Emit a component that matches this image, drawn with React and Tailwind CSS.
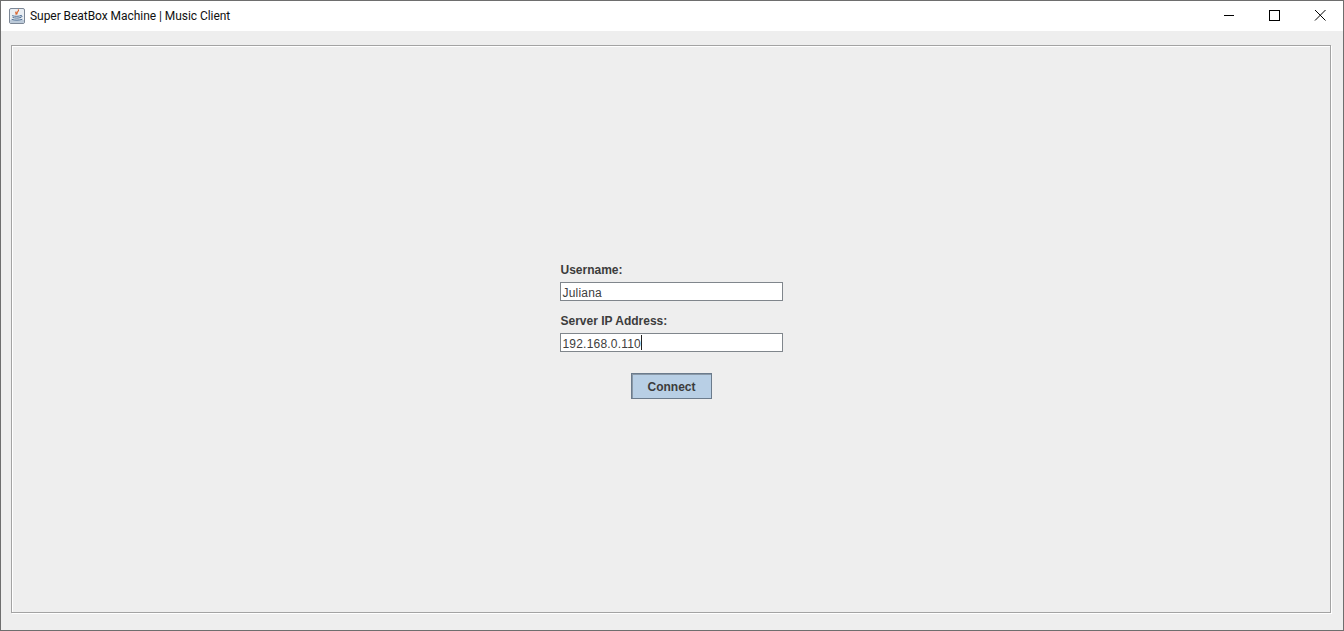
const FONT = "font-['Liberation_Sans',Arial,sans-serif]";

function JavaIcon() {
  return (
    <svg width="16" height="16" viewBox="0 0 16 16" fill="none" className="shrink-0">
      <rect x="0.5" y="0.5" width="15" height="15" rx="1.5" fill="#e9eef3" stroke="#7c8796" />
      <path d="M1 12h14v2.2a.8.8 0 0 1-.8.8H1.8a.8.8 0 0 1-.8-.8z" fill="#bccad9" />
      <path d="M9.4 1.8c1 1.4-2.4 2.2-1.3 4M7 3.8c-1 1 .5 1.6.1 2.6" stroke="#d9622b" strokeWidth="1.1" strokeLinecap="round" />
      <path d="M3.5 7.8c2.5.8 6.4.7 8.4-.2M4 9.6c2.4.7 5.4.7 7.6 0M12 7.6c1.6-.3 1.7 1.4-.5 1.8" stroke="#4f6f95" strokeWidth="1" strokeLinecap="round" />
      <path d="M3 11.5c3 .9 7 .8 10-.1" stroke="#4f6f95" strokeWidth="1" strokeLinecap="round" />
    </svg>
  );
}

function Field({ value, caret }) {
  return (
    <div className="flex h-[19px] w-[223px] items-center border border-[#80868c] bg-white pl-[2px] pt-[3px] text-[12px] leading-none tracking-[0.2px] text-[#404040]">
      <span>{value}</span>
      {caret && <span className="-mt-[3px] h-[15px] w-px bg-[#222222]" />}
    </div>
  );
}

export default function App() {
  return (
    <div className={`flex h-[631px] w-[1344px] flex-col overflow-hidden border border-[#6e6e6e] bg-[#eeeeee] ${FONT}`}>
      <header className="flex h-[30px] shrink-0 items-center bg-white pl-[8px]">
        <JavaIcon />
        <span className="ml-[5px] font-['Roboto',sans-serif] text-[12px] leading-none tracking-[-0.05px] text-[#111111]">
          Super BeatBox Machine | Music Client
        </span>
        <div className="ml-auto flex items-center text-black">
          <svg width="46" height="30" viewBox="0 0 46 30" fill="none" stroke="currentColor">
            <path d="M19 14.5h10" />
          </svg>
          <svg width="46" height="30" viewBox="0 0 46 30" fill="none" stroke="currentColor">
            <rect x="18.5" y="9.5" width="10" height="10" />
          </svg>
          <svg width="46" height="30" viewBox="0 0 46 30" fill="none" stroke="currentColor">
            <path d="M18 9l10.5 10.5M28.5 9L18 19.5" />
          </svg>
        </div>
      </header>

      <main className="flex min-h-0 flex-1 pb-[17px] pl-[10px] pr-[12px] pt-[14px]">
        <section className="flex flex-1 items-center justify-center border border-[#a3a3a3] pt-[3px] shadow-[inset_1px_1px_0_#ffffff,1px_1px_0_#ffffff]">
          <form className="flex w-[223px] flex-col">
            <label className="mb-[5px] pl-px text-[12px] font-bold leading-[14px] text-[#3c3c3c]">Username:</label>
            <Field value="Juliana" />
            <label className="mb-[5px] ml-px mt-[13px] text-[12px] font-bold leading-[14px] text-[#3c3c3c]">Server IP Address:</label>
            <Field value="192.168.0.110" caret />
            <button
              type="button"
              className="mt-[21px] h-[26px] w-[81px] self-center border border-[#6b7b8c] bg-[#b8cfe5] pl-px pt-[2px] text-[12px] font-bold leading-none text-[#3c3c3c] shadow-[inset_1px_1px_0_#8a99a8]"
            >
              Connect
            </button>
          </form>
        </section>
      </main>
    </div>
  );
}
